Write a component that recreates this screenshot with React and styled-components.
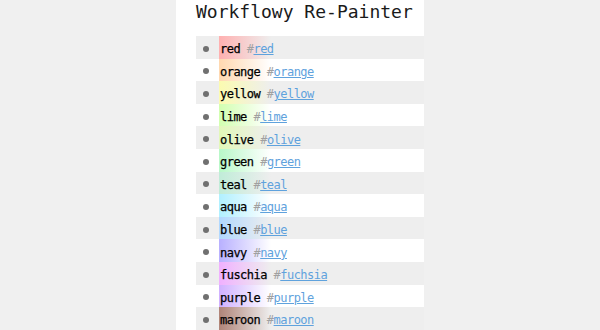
import React from "react";
import styled, { createGlobalStyle } from "styled-components";

const colors = [
    { name: "red", tag: "red", tint: "#ffb0b0" },
    { name: "orange", tag: "orange", tint: "#ffd8b0" },
    { name: "yellow", tag: "yellow", tint: "#fbfbb0" },
    { name: "lime", tag: "lime", tint: "#d2ffb0" },
    { name: "olive", tag: "olive", tint: "#e2f8b8" },
    { name: "green", tag: "green", tint: "#b8f8c8" },
    { name: "teal", tag: "teal", tint: "#c0ecd8" },
    { name: "aqua", tag: "aqua", tint: "#b0f0ff" },
    { name: "blue", tag: "blue", tint: "#b0d8ff" },
    { name: "navy", tag: "navy", tint: "#b8b0ff" },
    { name: "fuschia", tag: "fuchsia", tint: "#f0b0ff" },
    { name: "purple", tag: "purple", tint: "#d0b0ff" },
    { name: "maroon", tag: "maroon", tint: "#b08478" },
];

const GlobalStyle = createGlobalStyle`
    body {
        margin: 0;
        background: #f0f0f0;
        font-family: "DejaVu Sans Mono", monospace;
    }
`;

const Page = styled.div`
    width: 248px;
    min-height: 330px;
    margin-left: 176px;
    background: #ffffff;
    padding-left: 20px;
    box-sizing: border-box;
`;

const Title = styled.h1`
    margin: 0;
    height: 36px;
    font-size: 18px;
    font-weight: normal;
    line-height: 24px;
    color: #1a1a1a;
`;

const List = styled.ul`
    list-style: none;
    margin: 0;
    padding: 0;
`;

const Row = styled.li`
    display: flex;
    align-items: center;
    height: 22.6px;
    background: ${(p) => (p.$odd ? "#ffffff" : "#eeeeee")};
`;

const Bullet = styled.span`
    width: 23px;
    display: flex;
    justify-content: center;
    align-items: center;
    align-self: stretch;
    padding-top: 3px;
    box-sizing: border-box;

    &::before {
        content: "";
        width: 6px;
        height: 6px;
        border-radius: 50%;
        background: #707070;
        margin-left: -3px;
    }
`;

const Content = styled.div`
    flex: 1;
    align-self: stretch;
    display: flex;
    align-items: center;
    padding: 4px 0 0 1px;
    box-sizing: border-box;
    font-size: 12px;
    letter-spacing: -0.53px;
    background: linear-gradient(to right, ${(p) => p.$tint} 0px, transparent 52px);
`;

const Name = styled.span`
    color: #000;
    margin-right: 6.7px;
    -webkit-text-stroke: 0.25px #000;
`;

const Hash = styled.span`
    color: #a0a0a0;
`;

const Tag = styled.a`
    color: #5fa2dd;
    text-decoration: underline;
`;

export default function App() {
    return (
        <>
            <GlobalStyle />
            <Page>
                <Title>Workflowy Re-Painter</Title>
                <List>
                    {colors.map((c, i) => (
                        <Row key={c.name} $odd={i % 2 === 1}>
                            <Bullet />
                            <Content $tint={c.tint}>
                                <Name>{c.name}</Name>
                                <Hash>#</Hash>
                                <Tag href="#">{c.tag}</Tag>
                            </Content>
                        </Row>
                    ))}
                </List>
            </Page>
        </>
    );
}
